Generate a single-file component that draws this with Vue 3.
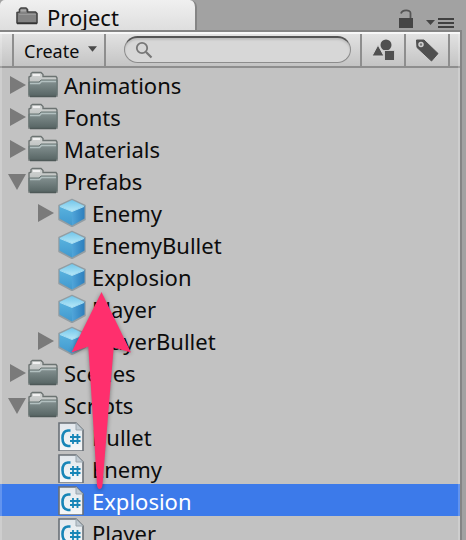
<script setup>
import { ref } from 'vue'

const query = ref('')
const selected = ref('script-explosion')

const rows = [
  { id: 'animations', name: 'Animations', kind: 'folder', level: 1, state: 'closed' },
  { id: 'fonts', name: 'Fonts', kind: 'folder', level: 1, state: 'closed' },
  { id: 'materials', name: 'Materials', kind: 'folder', level: 1, state: 'closed' },
  { id: 'prefabs', name: 'Prefabs', kind: 'folder', level: 1, state: 'open' },
  { id: 'prefab-enemy', name: 'Enemy', kind: 'prefab', level: 2, state: 'closed' },
  { id: 'prefab-enemybullet', name: 'EnemyBullet', kind: 'prefab', level: 2 },
  { id: 'prefab-explosion', name: 'Explosion', kind: 'prefab', level: 2 },
  { id: 'prefab-player', name: 'Player', kind: 'prefab', level: 2 },
  { id: 'prefab-playerbullet', name: 'PlayerBullet', kind: 'prefab', level: 2, state: 'closed' },
  { id: 'scenes', name: 'Scenes', kind: 'folder', level: 1, state: 'closed' },
  { id: 'scripts', name: 'Scripts', kind: 'folder', level: 1, state: 'open' },
  { id: 'script-bullet', name: 'Bullet', kind: 'script', level: 2 },
  { id: 'script-enemy', name: 'Enemy', kind: 'script', level: 2 },
  { id: 'script-explosion', name: 'Explosion', kind: 'script', level: 2 },
  { id: 'script-player', name: 'Player', kind: 'script', level: 2 }
]
</script>

<template>
  <main class="window">
    <svg class="defs" aria-hidden="true">
      <defs>
        <linearGradient id="folder-front" x1="0" y1="0" x2="0" y2="1">
          <stop offset="0" stop-color="#879494" />
          <stop offset="1" stop-color="#566463" />
        </linearGradient>
        <linearGradient id="folder-back" x1="0" y1="0" x2="0" y2="1">
          <stop offset="0" stop-color="#d3d5d4" />
          <stop offset="1" stop-color="#a5abaa" />
        </linearGradient>
        <linearGradient id="cube-left" x1="0" y1="0" x2="0" y2="1">
          <stop offset="0" stop-color="#59b2de" />
          <stop offset="1" stop-color="#4199cf" />
        </linearGradient>
        <linearGradient id="cube-right" x1="0" y1="0" x2="1" y2="0">
          <stop offset="0" stop-color="#50a5d9" />
          <stop offset="1" stop-color="#2d7fbd" />
        </linearGradient>
        <linearGradient id="cube-top" x1="0" y1="0" x2="0" y2="1">
          <stop offset="0" stop-color="#73c6ea" />
          <stop offset="1" stop-color="#b6e8f8" />
        </linearGradient>
        <linearGradient id="page-fill" x1="0" y1="0" x2="0" y2="1">
          <stop offset="0" stop-color="#e2e8ed" />
          <stop offset="1" stop-color="#f5f7f8" />
        </linearGradient>
      </defs>
    </svg>

    <header class="tabs">
      <button class="tab" type="button">
        <svg class="tab-icon" viewBox="0 0 24 20" aria-hidden="true">
          <path d="M2 17V6.500L4.500 6V3.500L6 2h5l1.500 1.500V6H20.500L22 7.500V17Z" fill="#838383" stroke="#444" stroke-width="1.600" stroke-linejoin="round" />
          <path d="M5.500 4.500H11" stroke="#aaa" stroke-width="2" />
          <path d="M4 8.500H21" stroke="#999" stroke-width="1" />
          <path d="M2 17.500H22" stroke="#333" stroke-width="1.500" />
        </svg>
        <span>Project</span>
      </button>
      <div class="window-tools">
        <button class="plain" type="button" aria-label="Lock">
          <svg class="lock" viewBox="0 0 16 20" aria-hidden="true">
            <path d="M3 5.500C4 1.500 12.500 1.500 12.500 5V11" fill="none" stroke="#555" stroke-width="1.800" />
            <rect x="1" y="10" width="14" height="10" fill="#454545" />
          </svg>
        </button>
        <button class="plain" type="button" aria-label="Panel menu">
          <svg class="menu" viewBox="0 0 28 12" aria-hidden="true">
            <path d="M0 4H9L4.500 9Z" fill="#454545" />
            <path d="M12 3H28M12 7H28M12 11H28" stroke="#404040" stroke-width="2" />
          </svg>
        </button>
      </div>
    </header>

    <section class="panel" aria-label="Project">
      <div class="toolbar">
        <button class="create" type="button">
          <span>Create</span>
          <svg class="caret" viewBox="0 0 10 6" aria-hidden="true"><path d="M0 0H10L5 6Z" fill="#4a4a4a" /></svg>
        </button>
        <div class="search-area">
          <label class="search">
            <svg class="glass" viewBox="0 0 18 18" aria-hidden="true">
              <circle cx="7" cy="7" r="5.200" fill="none" stroke="#777" stroke-width="1.800" />
              <path d="M11 11L16.500 16.500" stroke="#777" stroke-width="2.200" />
            </svg>
            <input v-model="query" type="text" aria-label="Search assets" />
          </label>
        </div>
        <button class="tool" type="button" aria-label="Search by type">
          <svg class="tool-icon" viewBox="0 0 24 24" aria-hidden="true">
            <circle cx="15" cy="7" r="5.500" fill="#505050" />
            <path d="M1 18L7 7L13 18Z" fill="#505050" stroke="#d4d4d4" stroke-width="1" />
            <rect x="13.500" y="12.500" width="10" height="10" fill="#505050" stroke="#c8c8c8" stroke-width="1" />
          </svg>
        </button>
        <button class="tool" type="button" aria-label="Search by label">
          <svg class="tool-icon" viewBox="0 0 24 24" aria-hidden="true">
            <path d="M1.500 2H9L23 15.500L16.500 23L2 9.500Z" fill="#505050" stroke="#505050" stroke-linejoin="round" />
            <circle cx="6" cy="6.500" r="2" fill="#777" stroke="#d0d0d0" stroke-width="1.500" />
          </svg>
        </button>
        <div class="tool-end"></div>
      </div>

      <ul class="tree" role="tree" aria-label="Assets">
        <li
          v-for="row in rows"
          :key="row.id"
          class="row"
          :class="[`level-${row.level}`, { selected: row.id === selected }]"
          role="treeitem"
          :aria-level="row.level"
          :aria-selected="row.id === selected"
          @click="selected = row.id"
        >
          <button v-if="row.state" class="twist" type="button" :aria-label="`Toggle ${row.name}`">
            <svg class="twist-icon" viewBox="0 0 20 20" aria-hidden="true">
              <path v-if="row.state === 'closed'" d="M2 2L18 11L2 20Z" fill="#7a7a7a" />
              <path v-else d="M0 4H18L9 20Z" fill="#7a7a7a" />
            </svg>
          </button>
          <span v-else class="twist"></span>

          <svg v-if="row.kind === 'folder'" class="icon" viewBox="0 -2 30 30" aria-hidden="true">
            <path d="M1 25V6L3 5V2.500L4.500 1.500H13L15 3.500V5.500H28L29 7V25Z" fill="url(#folder-back)" stroke="#6c7372" stroke-width="1.400" />
            <path d="M5 3H12V5H5Z" fill="#f1f1f1" />
            <path d="M1 11H11L13 9H29V24L27.500 25.500H2.500L1 24Z" fill="url(#folder-front)" stroke="#697675" stroke-width="1" />
            <path d="M2 12.500H11.500L13.500 10.500H28" fill="none" stroke="#b2c0c0" stroke-width="1.400" />
            <path d="M2 25.500H28" stroke="#4e5958" stroke-width="1.500" />
          </svg>
          <svg v-else-if="row.kind === 'prefab'" class="icon" viewBox="0 -1 30 30" aria-hidden="true">
            <path d="M16 1.500L29 7.500V21.500L16 28.500L3 21.500V7.500Z" fill="#7897a8" stroke="#929da3" stroke-width="1.500" stroke-linejoin="round" />
            <path d="M3.500 8L16 13V27.500L3.500 20.500Z" fill="url(#cube-left)" />
            <path d="M28.500 8L16 13V27.500L28.500 20.500Z" fill="url(#cube-right)" />
            <path d="M16 2L28.500 8L16 13.500L3.500 8Z" fill="url(#cube-top)" />
            <path d="M4 8.500L16 13.500L28 8.500" fill="none" stroke="#a6ddf3" stroke-width="1" />
          </svg>
          <svg v-else class="icon" viewBox="0 0 30 30" aria-hidden="true">
            <path d="M3 2H20L27 9V30H3Z" fill="url(#page-fill)" stroke="#697077" stroke-width="1.600" />
            <path d="M20 2V9H27Z" fill="#c1cbd3" stroke="#9ba6ae" stroke-width="1" />
            <path d="M14.500 9.500H12C8 10 6.500 13 6.500 17C6.500 21 8 24.500 12 25H14.500" fill="none" stroke="#1785b7" stroke-width="2.600" />
            <path d="M17 13V23M21.500 13V23M14 16H24.500M14 20H24.500" stroke="#1785b7" stroke-width="1.800" />
          </svg>
          <span class="name">{{ row.name }}</span>
        </li>
      </ul>

      <svg class="arrow" viewBox="0 0 66 204" aria-hidden="true">
        <path d="M33.500 4L63 64.500L45.700 59.500Q41 115 34.500 197Q34 201 31.500 201Q29.500 201 29 197Q25 130 20.300 58.500L3.500 64.500Z" fill="#ff2f6d" />
      </svg>
    </section>
  </main>
</template>

<style>
body {
  margin: 0;
}
</style>

<style scoped>
.window {
  display: flex;
  flex-direction: column;
  height: 100vh;
  overflow: hidden;
  background: #a2a2a2;
  color: #0c0c0c;
  font-family: "Noto Sans", "Open Sans", sans-serif;
  font-size: 22px;
}

.defs {
  position: absolute;
  width: 0;
  height: 0;
}

button {
  margin: 0;
  padding: 0;
  border: 0;
  background: none;
  color: inherit;
  font: inherit;
}

svg {
  display: block;
  flex: none;
}

.tabs {
  display: flex;
  flex: none;
  justify-content: space-between;
  height: 30px;
}

.tab {
  display: flex;
  align-items: center;
  gap: 8px;
  box-sizing: border-box;
  width: 197px;
  padding: 4px 0 0 15px;
  border-right: 2px solid #858585;
  border-radius: 5px 7px 0 0;
  background: linear-gradient(#f0f0f0, #dedede);
  line-height: 24px;
}

.tab-icon {
  width: 24px;
  height: 20px;
  margin-bottom: 3px;
}

.window-tools {
  display: flex;
  align-items: flex-end;
  gap: 12px;
  padding: 0 12px 2px 0;
}

.lock {
  width: 16px;
  height: 20px;
}

.menu {
  width: 28px;
  height: 12px;
}

.panel {
  position: relative;
  flex: 1;
  min-height: 0;
  margin-right: 4px;
  border-top: 2px solid #858585;
  border-right: 2px solid #858585;
  background: #c2c2c2;
  overflow: hidden;
}

.panel::after {
  content: "";
  position: absolute;
  inset: 0;
  border: solid rgba(255, 255, 255, 0.2);
  border-width: 0 2px;
  pointer-events: none;
}

.toolbar {
  display: flex;
  box-sizing: border-box;
  height: 36px;
  padding-left: 12px;
  border-top: 2px solid #f8f8f8;
  border-bottom: 2px solid #8e8e8e;
  background: linear-gradient(#e2e2e2, #c4c4c4);
}

.create {
  display: flex;
  align-items: center;
  gap: 9px;
  padding: 2px 7px 0 10px;
  border: solid #8e8e8e;
  border-width: 0 2px;
  font-size: 18px;
}

.caret {
  width: 9px;
  height: 6px;
  margin-bottom: 4px;
}

.search-area {
  display: flex;
  flex: 1;
  min-width: 0;
  padding: 2px 9px 3px 18px;
}

.search {
  display: flex;
  flex: 1;
  align-items: center;
  min-width: 0;
  gap: 6px;
  padding: 0 12px 0 10px;
  border: 1px solid #8c8c8c;
  border-top: 2px solid #555;
  border-radius: 14px;
  background: #d7d7d7;
  box-shadow: inset 0 2px 2px #bebebe;
}

.glass {
  width: 18px;
  height: 18px;
}

.search input {
  flex: 1;
  min-width: 0;
  padding: 0;
  border: 0;
  outline: 0;
  background: none;
  font: inherit;
  font-size: 16px;
}

.tool {
  display: flex;
  align-items: center;
  justify-content: center;
  width: 44px;
  box-sizing: border-box;
  border-left: 2px solid #8e8e8e;
}

.tool-icon {
  width: 24px;
  height: 24px;
}

.tool-end {
  width: 10px;
  border-left: 2px solid #8e8e8e;
}

.tree {
  margin: 0;
  padding: 0;
  list-style: none;
}

.row {
  display: flex;
  align-items: center;
  height: 32px;
  padding-left: 8px;
}

.level-2 {
  padding-left: 36px;
}

.selected {
  background: #3c7aea;
  color: #fff;
}

.twist {
  flex: none;
  width: 20px;
}

.twist-icon {
  width: 20px;
  height: 20px;
}

.icon {
  width: 30px;
  height: 30px;
}

.name {
  padding: 2px 0 0 6px;
  line-height: 28px;
}

.arrow {
  position: absolute;
  top: 256px;
  left: 68px;
  width: 66px;
  height: 204px;
  filter: drop-shadow(0 1px 2px rgba(0, 0, 0, 0.4));
  pointer-events: none;
}
</style>
